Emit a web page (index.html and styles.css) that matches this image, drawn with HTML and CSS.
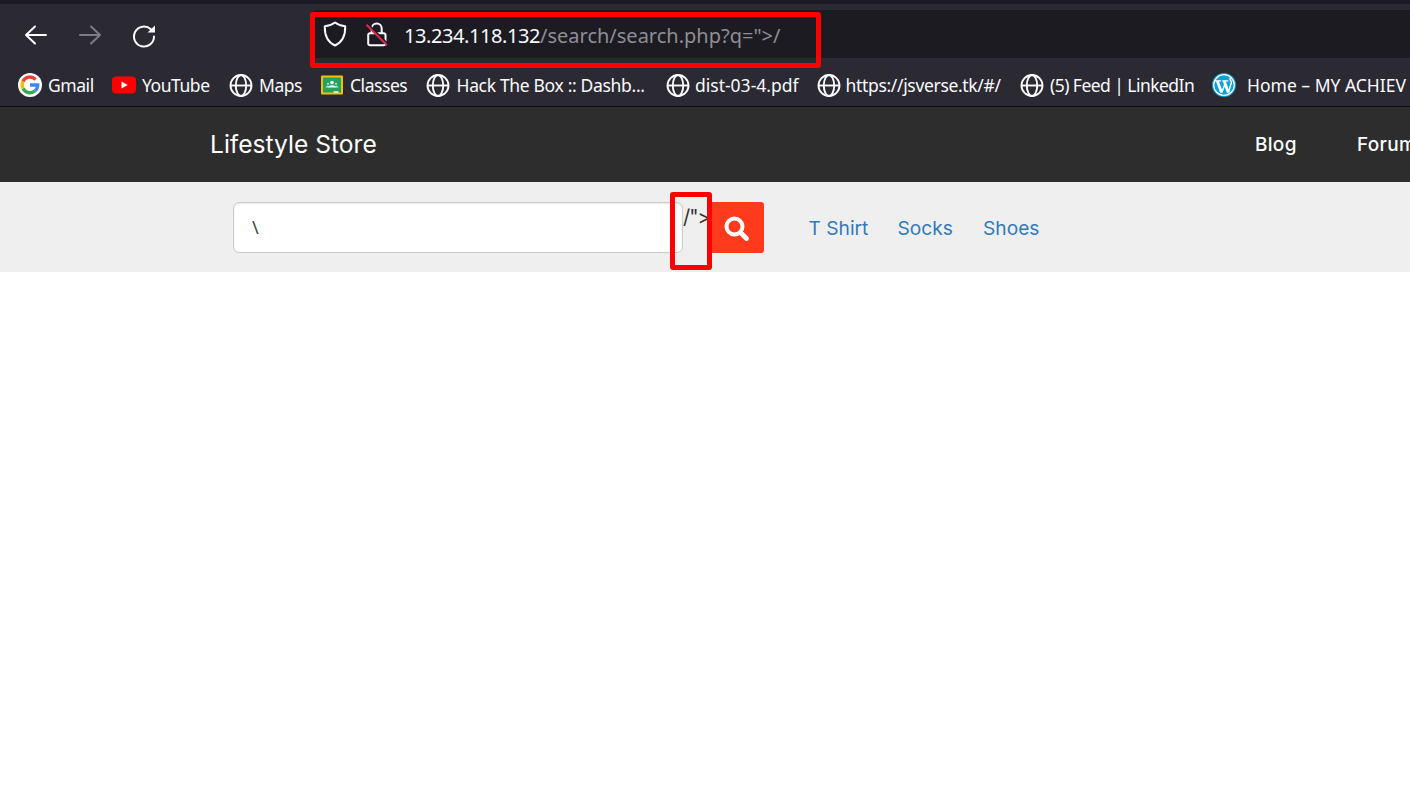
FILE: index.html
```html
<!DOCTYPE html>
<html lang="en">
<head>
<meta charset="utf-8">
<title>Lifestyle Store</title>
<link rel="stylesheet" href="styles.css">
</head>
<body>
<svg width="0" height="0" class="defs">
  <symbol id="globe" viewBox="0 0 24 24"><g fill="none" stroke="#fbfbfe" stroke-width="1.9"><circle cx="12" cy="12.500" r="10.5"/><ellipse cx="12" cy="12.500" rx="5.2" ry="10.5"/><path d="M1.5 12.500h21"/></g></symbol>
</svg>
<div class="chrome">
  <div class="toolbar">
    <div class="nav">
      <svg class="back" width="24" height="24" viewBox="0 0 24 24"><path d="M22 12H2M11 3.5L2 12l9 8.5"/></svg>
      <svg class="forward" width="24" height="24" viewBox="0 0 24 24"><path d="M2 12h20M13 3.5l9 8.5-9 8.5"/></svg>
      <svg class="reload" width="24" height="24" viewBox="0 0 24 24"><path d="M22 12.500a10 10 0 1 1-3.200-7.300"/><path class="tip" d="M23 1.600v7h-7.500z"/></svg>
    </div>
    <div class="urlbar">
      <svg class="shield" width="24" height="26" viewBox="0 0 24 26"><path d="M12 1.500C9 3.800 5.500 5 1.800 5.200 1.500 14.500 4.500 21 12 24.500c7.500-3.500 10.500-10 10.200-19.300C18.500 5 15 3.800 12 1.500z"/></svg>
      <svg class="lock" width="24" height="26" viewBox="0 0 24 26"><rect x="3.200" y="12.200" width="17.300" height="12" rx="2"/><path d="M6.700 12V7.500a5 5 0 0 1 10 0V12"/><path class="gap" d="M3 3.200l20 20"/><path class="slash" d="M1.500 3.700l20.500 20.500"/></svg>
      <span class="url"><span class="host">13.234.118.132</span><span class="path">/search/search.php?q="&gt;/</span></span>
      <div class="mark mark-url"></div>
    </div>
  </div>
  <div class="bookmarks">
    <div class="bm gmail"><svg width="24" height="24" viewBox="0 0 24 24"><circle cx="12" cy="12" r="12" fill="#fff"/><g fill="none" stroke-width="3.400"><path stroke="#ea4335" d="M4.900 8.500A7.700 7.700 0 0 1 17.600 6.600"/><path stroke="#fbbc05" d="M5.100 15.500a7.700 7.700 0 0 1-.2-7"/><path stroke="#34a853" d="M16.800 18a7.700 7.700 0 0 1-11.700-2.500"/><path stroke="#4285f4" d="M12 12h7.700a7.700 7.700 0 0 1-2.900 6"/></g></svg><span>Gmail</span></div>
    <div class="bm youtube"><svg width="24" height="24" viewBox="0 0 24 24"><rect y="3.500" width="24" height="17" rx="4" fill="red"/><path d="M9.500 8.500v7l6.200-3.500z" fill="#fff"/></svg><span>YouTube</span></div>
    <div class="bm maps"><svg width="24" height="24"><use href="#globe"/></svg><span>Maps</span></div>
    <div class="bm classes"><svg width="24" height="24" viewBox="0 0 24 24"><rect x="1" y="2.500" width="22" height="19" rx="1" fill="#fbbc04"/><rect x="3" y="4.500" width="18" height="15" fill="#1fa463"/><g fill="#fff"><circle cx="12" cy="9.500" r="1.800"/><path d="M8 14.500c0-3 8-3 8 0z"/><g opacity=".65"><circle cx="8" cy="10.800" r="1.100"/><circle cx="16" cy="10.800" r="1.100"/><path d="M5.500 14.500c0-2 3-2 3-1.500v1.500zM18.500 14.500c0-2-3-2-3-1.500v1.500z"/></g><path d="M13.500 18.300h5v1.400h-5z"/></g></svg><span>Classes</span></div>
    <div class="bm htb"><svg width="24" height="24"><use href="#globe"/></svg><span>Hack The Box :: Dashb...</span></div>
    <div class="bm dist"><svg width="24" height="24"><use href="#globe"/></svg><span>dist-03-4.pdf</span></div>
    <div class="bm jsverse"><svg width="24" height="24"><use href="#globe"/></svg><span>https://jsverse.tk/#/</span></div>
    <div class="bm feed"><svg width="24" height="24"><use href="#globe"/></svg><span>(5) Feed | LinkedIn</span></div>
    <div class="bm home"><svg width="24" height="24" viewBox="0 0 24 24"><circle cx="12" cy="12" r="12" fill="#10a0d8"/><circle cx="12" cy="12" r="10.300" fill="none" stroke="#fff" stroke-width="1.200"/><path d="M3 7.800h6.200M10.300 7.800h6" stroke="#fff" stroke-width="1.300"/><path d="M5.300 8l4.300 11.500M12.200 8l4.100 11.500" stroke="#fff" stroke-width="2.800" fill="none"/><path d="M9.800 19.500L13 11M16.300 19.500l3-9.500c.6-2-1.800-2.800-1.300-5" stroke="#fff" stroke-width="1.500" fill="none"/></svg><span>Home – MY ACHIEV</span></div>
  </div>
</div>
<header class="site">
  <a class="brand">Lifestyle Store</a>
  <nav class="links"><a>Blog</a><a>Forum</a></nav>
</header>
<section class="searchbar">
  <div class="field">\</div>
  <div class="leak">/"&gt;<div class="mark mark-leak"></div></div>
  <button class="go"><svg width="26" height="26" viewBox="0 0 26 26"><circle cx="10.500" cy="10.500" r="8" fill="none" stroke="#fff" stroke-width="4"/><path d="M16.500 16.500l6 6" stroke="#fff" stroke-width="4.800" stroke-linecap="round"/></svg></button>
  <nav class="cats"><a class="tshirt">T Shirt</a><a class="socks">Socks</a><a>Shoes</a></nav>
</section>
</body>
</html>
```

FILE: styles.css
```css
* { box-sizing: border-box; }
body { margin: 0; background: #fff; overflow: hidden; font-family: "Noto Sans", sans-serif; }
.defs { display: block; position: absolute; }
svg { display: block; flex: none; }

.chrome { height: 107px; background: #2b2a33; border-top: 4px solid #1c1b22; border-bottom: 1px solid #0c0c0d; color: #fbfbfe; }
.toolbar { display: flex; height: 60px; padding-top: 6px; }
.nav { display: flex; gap: 30px; width: 311px; padding: 13px 0 0 24px; }
.nav path { fill: none; stroke: #fbfbfe; stroke-width: 2; stroke-linecap: round; stroke-linejoin: round; }
.nav .forward path { stroke: #7d7c83; }
.nav .reload { margin-top: 1px; }
.nav .tip { fill: #fbfbfe; stroke: none; }
.urlbar { position: relative; display: flex; flex: 1; height: 48px; padding: 11px 0 0 12px; background: #1c1b22; border-radius: 6px 0 0 6px; }
.urlbar svg { fill: none; stroke: #fbfbfe; stroke-width: 2; stroke-linejoin: round; }
.lock { margin-left: 18px; }
.urlbar .lock .gap { stroke: #1c1b22; }
.urlbar .lock .slash { stroke: #e22850; }
.url { display: flex; margin-left: 15px; font-size: 20px; line-height: 30px; white-space: pre; }
.host { width: 136px; letter-spacing: -.42px; }
.path { color: #8f8e94; }
.mark { position: absolute; border: 5px solid #f00; border-radius: 3px; }
.mark-url { left: -1px; top: 2px; width: 511px; height: 56px; }

.bookmarks { display: flex; height: 42px; padding: 9px 0 0 18px; }
.bm { display: flex; flex: none; gap: 6px; font-size: 17.500px; line-height: 25px; letter-spacing: -.45px; white-space: nowrap; }
.gmail { width: 94px; }
.youtube { width: 117px; }
.maps { width: 91px; }
.classes { width: 105.500px; }
.htb { width: 240.500px; gap: 7px; letter-spacing: -.33px; }
.dist { width: 150.500px; gap: 5px; letter-spacing: 0; }
.jsverse { width: 203.500px; gap: 5px; letter-spacing: -.33px; }
.feed { width: 192px; letter-spacing: -.55px; }
.home { gap: 11px; letter-spacing: 0; }

.site { display: flex; align-items: center; height: 75px; padding-left: 210px; background: #2d2d2d; color: #fff; font-family: Inter, sans-serif; }
.brand { flex: none; width: 1045px; padding-bottom: 2px; font-size: 24.600px; }
.links { display: flex; flex: none; font-size: 19px; font-weight: 500; letter-spacing: .3px; }
.links a { flex: none; width: 102px; }
.site { overflow: hidden; }

.searchbar { display: flex; height: 90px; padding: 20px 0 0 233px; background: #efefef; }
.field { width: 450px; height: 51px; padding: 0 18px; border: 1px solid #ccc; border-radius: 6px; background: #fff; box-shadow: inset 0 1px 2px rgba(0,0,0,.1); color: #444; font-size: 18px; line-height: 48px; }
.leak { position: relative; width: 29px; color: #333; font: 20px/30px Inter, sans-serif; letter-spacing: -1px; }
.mark-leak { left: -13px; top: -10px; width: 42px; height: 78px; }
.go { display: flex; width: 52px; height: 51px; padding: 14px 0 0 12px; border: 0; border-radius: 0 3px 3px 0; background: #ff3a1d; }
.cats { display: flex; margin-left: 44.500px; color: #337ab7; font: 19.200px/52px Inter, sans-serif; }
.tshirt { width: 89px; }
.socks { width: 85.500px; }
```
